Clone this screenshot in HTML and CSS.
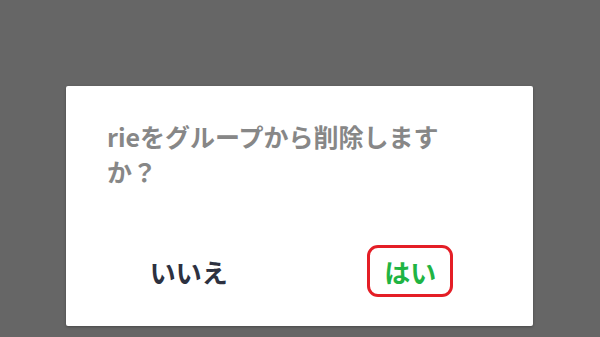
FILE: index.html
```html
<!DOCTYPE html>
<html lang="ja">
<head>
<meta charset="utf-8">
<link rel="stylesheet" href="styles.css">
</head>
<body>
<div class="dialog">
  <p class="message">rieをグループから削除しますか？</p>
  <div class="actions">
    <div class="btn btn-no">いいえ</div>
    <div class="btn btn-yes">はい</div>
  </div>
</div>
</body>
</html>
```
FILE: styles.css
```css
html, body {
  margin: 0;
  padding: 0;
}
body {
  width: 600px;
  height: 337px;
  background: #666666;
  overflow: hidden;
  font-family: "Noto Sans CJK JP", "Noto Sans", sans-serif;
}
.dialog {
  box-sizing: border-box;
  margin: 86px 0 0 66px;
  width: 467px;
  height: 240px;
  background: #ffffff;
  border-radius: 2px;
  display: flex;
  flex-direction: column;
  box-shadow: 0 1px 3px rgba(0,0,0,0.3);
}
.message {
  margin: 0;
  padding: 33px 56px 0 41px;
  font-size: 25px;
  line-height: 35px;
  font-weight: 700;
  color: #878787;
}
.actions {
  margin-top: auto;
  padding: 0 12px 29px 12px;
  display: grid;
  grid-template-columns: 1fr 1fr;
  justify-items: center;
}
.btn {
  box-sizing: border-box;
  width: 86px;
  height: 52px;
  display: flex;
  align-items: center;
  justify-content: center;
  font-size: 26px;
  font-weight: 700;
  border: 3px solid transparent;
  border-radius: 11px;
}
.btn-no {
  color: #2d3140;
}
.btn-yes {
  color: #1fb443;
  border-color: #e41e26;
}
```
